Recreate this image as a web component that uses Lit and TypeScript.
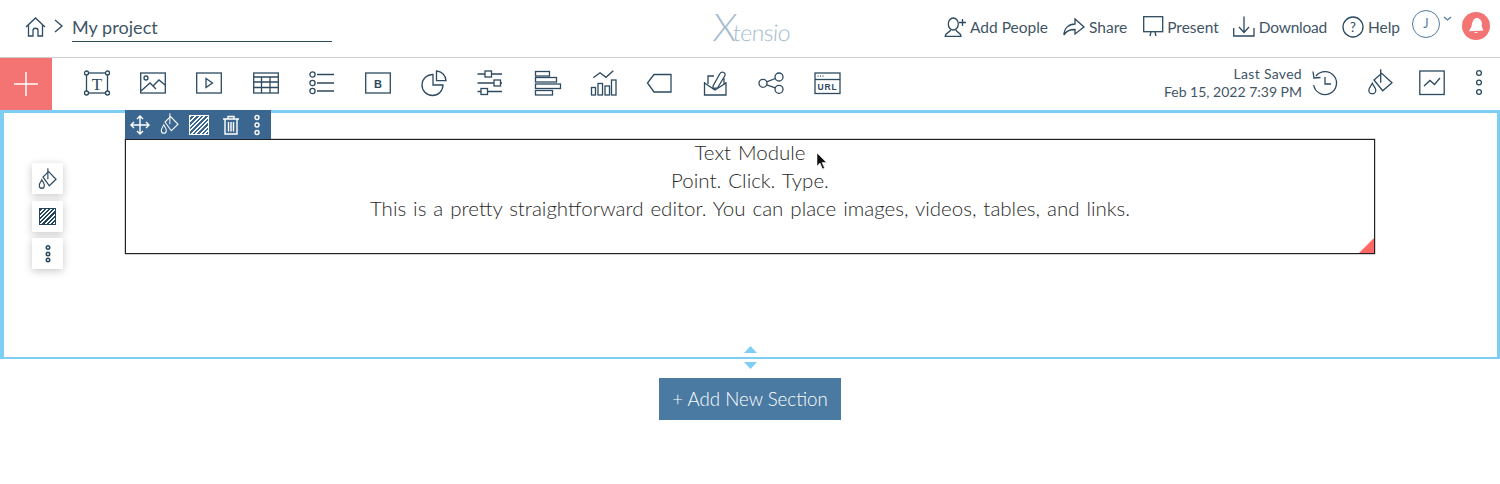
import { LitElement, html, css, svg } from "lit";
import { customElement } from "lit/decorators.js";

const ic = (w: number, h: number, body: unknown, cls = "") =>
  html`<svg class="ic ${cls}" width=${w} height=${h} viewBox="0 0 ${w} ${h}">${body}</svg>`;

const paint = svg`<path d="M7 11 14.7 4.3 25 13.7 15.7 21.7Z"/><path d="M13.7.3V13.7"/><path d="M5.3 14.3C4 17 1.8 19 1.8 21.2a3.5 3.5 0 0 0 7 0C8.8 19 6.6 17 5.3 14.3Z"/>`;
const dots = svg`<circle cx="5" cy="3" r="2.4"/><circle cx="5" cy="12.5" r="2.4"/><circle cx="5" cy="22" r="2.4"/>`;

const tools = [
  svg`<rect x="2.5" y="3" width="21" height="20"/><circle cx="2.5" cy="3" r="2" class="w"/><circle cx="23.5" cy="3" r="2" class="w"/><circle cx="2.5" cy="23" r="2" class="w"/><circle cx="23.5" cy="23" r="2" class="w"/><text x="13" y="19.5" text-anchor="middle" class="t-serif">T</text>`,
  svg`<rect x=".7" y="3" width="24.6" height="20"/><circle cx="6" cy="8" r="2"/><path d="M1 21 10 13 16 19M13 16 19 10 25 15"/>`,
  svg`<rect x=".7" y="3" width="24.6" height="20"/><path d="M10 8.5 16.5 13 10 17.5Z"/>`,
  svg`<rect x=".7" y="3" width="24.6" height="20"/><path d="M1 7H25M1 12H25M1 17.5H25M8.5 7V23M17 7V23"/>`,
  svg`<circle cx="3.5" cy="4.5" r="2.6"/><circle cx="3.5" cy="13" r="2.6"/><circle cx="3.5" cy="21" r="2.6"/><path d="M8 4.5H25M8 13H25M8 21H25"/>`,
  svg`<rect x=".7" y="3" width="24.6" height="20"/><text x="13" y="17.5" text-anchor="middle" class="t-b">B</text>`,
  svg`<path d="M12 4.5A10.5 10.5 0 1 0 22 15H12Z"/><path d="M15.5 1A10 10 0 0 1 25 10.7H15.5Z"/>`,
  svg`<path d="M.5 4H25M.5 13H25M.5 21.5H25"/><rect class="w" x="8" y="1" width="6.5" height="6"/><rect class="w" x="17" y="10" width="6.5" height="6"/><rect class="w" x="4" y="18.5" width="6.5" height="6"/>`,
  svg`<rect x="1.5" y="1.5" width="14" height="4.5"/><rect x="1.5" y="7.5" width="21" height="4.5"/><rect x="1.5" y="14" width="25" height="4.5"/><rect x="1.5" y="20.5" width="17" height="4.5"/>`,
  svg`<path d="M3.3 7.7 10 2.7 16 7.3 23.3.7"/><rect x="1.5" y="17.5" width="4" height="7.5"/><rect x="8" y="13.5" width="4.5" height="11.5"/><rect x="15" y="16" width="4.5" height="9"/><rect x="21.5" y="10" width="4.5" height="15"/>`,
  svg`<path d="M25 4.5H8L1.5 13 8 22H25Z"/>`,
  svg`<path d="M2.5 12V25H24V12M2.5 13 13 20 24 13M6 14V6H12M21 9H22V14"/><path d="M11 16 18 3.5C20 .5 24.5 3 22.7 6L15.5 18 11 18.5Z" class="w"/>`,
  svg`<circle cx="5" cy="13.3" r="4"/><circle cx="21" cy="7" r="4"/><circle cx="21" cy="19.3" r="4"/><path d="M8.7 11.8 17.3 8.5M8.7 14.8 17.3 17.8"/>`,
  svg`<rect x="1" y="3" width="25" height="20.5"/><path d="M1 9.5H26"/><path d="M3.5 6.2H4.5M6 6.2H7M8.5 6.2H9.5"/><text x="13.5" y="19.5" text-anchor="middle" class="t-url">URL</text>`,
];

@customElement("app-root")
export class AppRoot extends LitElement {
  static styles = css`
    :host { display: block; height: 484px; background: #fff; font-family: "Lato", "Liberation Sans", sans-serif; color: #3f5566; overflow: hidden; }
    .ic { display: block; flex: none; fill: none; stroke: #2c4a60; stroke-width: 1.3; overflow: visible; }
    .ic text { stroke: none; fill: #2c4a60; }
    .ic .w { fill: #fff; }
    .t-serif { font: 17px "Liberation Serif", serif; }
    .t-b { font: bold 11px "Liberation Sans", sans-serif; }
    .t-url { font: bold 8.5px "Liberation Sans", sans-serif; letter-spacing: .8px; }
    .head { height: 57px; border-bottom: 1px solid #ccc; display: grid; grid-template-columns: 1fr auto 1fr; align-items: center; }
    .crumb { display: flex; align-items: center; padding-left: 25px; }
    .home { margin-top: -4px; }
    .chev { margin: -6px 9px 0 8px; }
    .proj { width: 260px; height: 27px; padding-top: 1px; border-bottom: 1px solid #2c4a60; font-size: 18px; line-height: 26px; margin-top: -3px; box-sizing: content-box; letter-spacing: .05px; }
    .logo { font-weight: 300; color: #a3bbcd; font-size: 23px; line-height: 40px; width: 76px; white-space: nowrap; transform: translateX(1px) skewX(-4deg); letter-spacing: -.5px; }
    .logo span { font-size: 38px; font-weight: 300; margin-right: -3px; }
    .acts { display: flex; justify-content: flex-end; align-items: center; padding-right: 10px; margin: -3px 0 3px; }
    .act { display: flex; align-items: center; gap: 4px; font-size: 15.5px; margin-right: 15px; white-space: nowrap; }
    .act .ic, .act span { margin-top: 2px; }
    .act.s { margin-right: 16px; }
    .act.p { margin-right: 14px; }
    .act.d span { letter-spacing: -.25px; }
    .act.last { margin-right: 12px; }
    .avatar { width: 26px; height: 26px; border: 1px solid #4f7ea3; border-radius: 50%; display: flex; align-items: center; justify-content: center; font-size: 12.5px; color: #4f7ea3; margin-top: -4px; }
    .achev { margin: -14px 10px 0 3px; }
    .bell { width: 28px; height: 28px; border-radius: 50%; background: #f47373; display: flex; align-items: center; justify-content: center; }
    .bar { height: 52px; display: flex; align-items: center; }
    .plus { width: 52px; height: 52px; background: #f47373; display: flex; align-items: center; justify-content: center; flex: none; }
    .tools { display: flex; gap: 30.2px; margin: -2px 0 0 32px; flex: 1; }
    .saved { text-align: right; font-size: 14px; line-height: 18px; margin-right: 9px; white-space: nowrap; }
    .saved span { letter-spacing: .3px; }
    .bar-r { display: flex; align-items: center; padding-right: 16px; margin-top: -3px; }
    .sp29 { width: 29px; }
    .sp25 { width: 25px; }
    .section { position: relative; height: 249px; box-sizing: border-box; border: solid #7ecdf4; border-width: 3px 3px 2px 4px; padding-top: 26px; }
    .box { position: relative; width: 1250px; height: 115px; box-sizing: border-box; margin-left: 121px; border: 1px solid #222; box-shadow: 0 0 0 .5px rgba(0,0,0,.35); text-align: center; font-size: 20.5px; font-weight: 300; word-spacing: 1.4px; line-height: 28px; color: #2a2a2a; }
    .lines { margin-top: -2px; }
    .corner { position: absolute; right: 0; bottom: 0; width: 15px; height: 15px; background: #f66; clip-path: polygon(100% 0, 100% 100%, 0 100%); }
    .strip { position: absolute; left: 121px; top: -3px; height: 29px; width: 146px; background: #3b668f; display: flex; align-items: center; box-sizing: border-box; padding-left: 5px; gap: 10px; }
    .strip .ic { stroke: #fff; stroke-width: 1.4; }
    .hatch { width: 18px; height: 18px; box-sizing: content-box; flex: none; border: 1px solid #fff; background: repeating-linear-gradient(135deg, #fff 0 1.4px, transparent 1.4px 3.2px); }
    .m13 { margin-left: 3px; }
    .m12 { margin-left: 2px; }
    .float { position: absolute; left: 28px; top: 50px; display: flex; flex-direction: column; gap: 6.5px; }
    .fbtn { width: 31px; height: 31px; background: #fff; box-shadow: 0 2px 8px rgba(0,0,0,.22); display: flex; align-items: center; justify-content: center; }
    .fbtn .ic { stroke-width: 1.6; }
    .hatch.d { width: 15px; height: 15px; border-color: #24455e; background: repeating-linear-gradient(135deg, #24455e 0 1.6px, #fff 1.6px 3px); border-width: 1px; }
    .grip { position: absolute; left: 740px; bottom: -12px; width: 13px; height: 23px; display: flex; flex-direction: column; justify-content: space-between; }
    .tri { width: 13px; height: 7px; background: #7ecdf4; clip-path: polygon(50% 0, 100% 100%, 0 100%); }
    .tri.dn { clip-path: polygon(0 0, 100% 0, 50% 100%); }
    .add-wrap { display: flex; justify-content: center; padding-top: 19px; }
    .add { width: 182px; height: 42px; background: #4a7aa2; color: #fff; font-size: 18.7px; font-weight: 300; display: flex; align-items: center; justify-content: center; }
    .cursor { position: absolute; left: 816px; top: 152px; }
  `;

  render() {
    return html`
      <div class="head">
        <div class="crumb">
          ${ic(21, 20, svg`<path d="M1 10 10.5 1 20 10"/><path d="M3.5 8V19H8V13.5C8 10.5 13 10.5 13 13.5V19H17.5V8"/>`, "home")}
          ${ic(9, 14, svg`<path d="M1 1 8 7 1 13"/>`, "chev")}
          <div class="proj">My project</div>
        </div>
        <div class="logo"><span>X</span>tensio</div>
        <div class="acts">
          <div class="act">${ic(22, 20, svg`<ellipse cx="9.3" cy="7" rx="5" ry="6"/><path d="M6.5 13C6 15.5 1.2 15.5 1.2 19.3H17C17 15.5 12.5 15.5 12 13"/><path d="M18.5 2V9M15 5.5H22"/>`)}<span>Add People</span></div>
          <div class="act s">${ic(22, 18, svg`<path d="M1 17C1 10 6 6 12 6V1L21 9 12 16V11.5C7 11.5 3 13 1 17Z"/>`)}<span>Share</span></div>
          <div class="act p">${ic(20, 21, svg`<rect x=".7" y=".7" width="19" height="15"/><path d="M8 16 7 20M12 16 13 20"/>`)}<span>Present</span></div>
          <div class="act d">${ic(22, 21, svg`<path d="M11 .5V16M6 11 11 16.5 16 11M.7 12V20H21V12"/>`)}<span>Download</span></div>
          <div class="act last">${ic(22, 22, svg`<circle cx="11" cy="11" r="10"/><text x="11" y="15.5" text-anchor="middle" style="font:13px Lato,sans-serif">?</text>`)}<span>Help</span></div>
          <div class="avatar">J</div>
          ${ic(9, 5, svg`<path d="M1 1 4.5 4 8 1" style="stroke:#4f7ea3"/>`, "achev")}
          <div class="bell">${ic(16, 17, svg`<path d="M9.5 1.5C13 2.5 14 6 13 9L14.5 13 2 13.5 4 10C4.5 6 6 1.5 9.5 1.5Z" style="fill:#fff;stroke:#fff"/><path d="M6 15A2.5 2.5 0 0 0 10 15Z" style="fill:#fff;stroke:none"/>`)}</div>
        </div>
      </div>
      <div class="bar">
        <div class="plus">${ic(26, 26, svg`<path d="M13 1V25M1 13H25" style="stroke:#fff;stroke-width:1.5"/>`)}</div>
        <div class="tools">${tools.map((t) => ic(26, 26, t))}</div>
        <div class="bar-r">
          <div class="saved"><span>Last Saved</span><br />Feb 15, 2022 7:39 PM</div>
          ${ic(27, 26, svg`<path d="M5 6A11.5 11.5 0 1 1 2.7 15"/><path d="M2 1.5 3 8 9.5 7.5"/><path d="M14 7V14H20"/>`)}
          <div class="sp29"></div>
          ${ic(27, 28, paint)}
          <div class="sp25"></div>
          ${ic(26, 26, svg`<rect x=".8" y="1" width="24.4" height="23.5"/><path d="M5 16 11 10.5 15.5 14.5 21 8"/>`)}
          <div class="sp29"></div>
          ${ic(10, 26, dots)}
        </div>
      </div>
      <div class="section">
        <div class="box">
          <div class="lines">Text Module<br />Point. Click. Type.<br />This is a pretty straightforward editor. You can place images, videos, tables, and links.</div>
          <div class="corner"></div>
        </div>
        <div class="strip">
          ${ic(20, 20, svg`<path d="M10 1V19M1 10H19M7 4 10 1 13 4M7 16 10 19 13 16M4 7 1 10 4 13M16 7 19 10 16 13"/>`)}
          ${ic(19, 23, svg`<g transform="scale(.72 .82)">${paint}</g>`)}
          <div class="hatch"></div>
          ${ic(18, 20, svg`<path d="M1 4H17M6 4V1.5H12V4M3 4V19H15V4M6.5 7V16.5M9 7V16.5M11.5 7V16.5"/>`, "m13")}
          ${ic(10, 22, svg`<circle cx="5" cy="3.5" r="2"/><circle cx="5" cy="11" r="2"/><circle cx="5" cy="18.5" r="2"/>`, "m12")}
        </div>
        <div class="float">
          <div class="fbtn">${ic(19, 21, svg`<g transform="scale(.72 .82)">${paint}</g>`)}</div>
          <div class="fbtn"><div class="hatch d"></div></div>
          <div class="fbtn">${ic(10, 20, svg`<circle cx="5" cy="3.5" r="1.7"/><circle cx="5" cy="10" r="1.7"/><circle cx="5" cy="16" r="1.7"/>`)}</div>
        </div>
        <div class="grip"><div class="tri"></div><div class="tri dn"></div></div>
      </div>
      <div class="add-wrap"><div class="add">+ Add New Section</div></div>
      <svg class="cursor" width="12" height="18" viewBox="0 0 12 18"><path d="M1 1V14L4 11 6.5 17 8.5 16 6 10.5H10.5Z" fill="#111" stroke="#fff" stroke-width=".5"/></svg>
    `;
  }
}
